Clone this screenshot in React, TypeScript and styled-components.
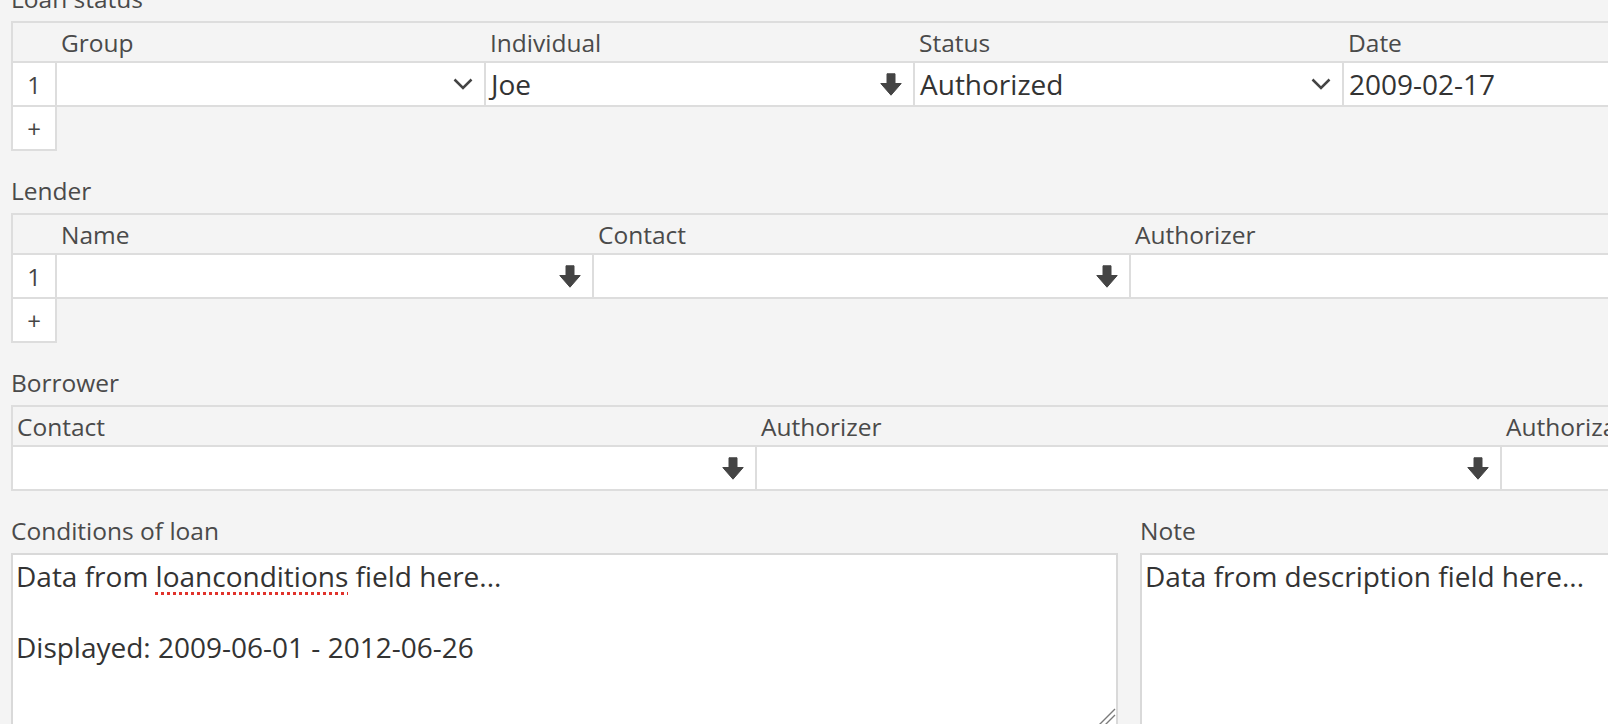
import React from "react";
import styled, { createGlobalStyle } from "styled-components";

const GlobalStyle = createGlobalStyle`
  html, body {
    margin: 0;
    padding: 0;
    background: #f4f4f4;
    overflow: hidden;
  }
  body {
    font-family: "Open Sans", "Noto Sans", "Liberation Sans", sans-serif;
  }
`;

const Page = styled.div`
  display: flex;
  flex-direction: column;
  gap: 24px;
  margin-top: -17px;
  padding-left: 11px;
  width: 2300px;
`;

const Section = styled.section`
  display: flex;
  flex-direction: column;
`;

const SectionLabel = styled.div`
  font-size: 24.5px;
  line-height: 32px;
  margin-bottom: 6px;
  color: #4a4a4a;
  white-space: nowrap;
`;

const Grid = styled.div<{ $cols: string }>`
  display: grid;
  grid-template-columns: ${(p) => p.$cols};
  border-top: 2px solid #dddddd;
  width: max-content;
`;

const HeadCell = styled.div<{ $first?: boolean }>`
  box-sizing: border-box;
  height: 40px;
  display: flex;
  align-items: center;
  padding-left: 4px;
  border-bottom: 2px solid #dddddd;
  border-left: ${(p) => (p.$first ? "2px solid #dddddd" : "none")};
  font-size: 24.5px;
  color: #4a4a4a;
  white-space: nowrap;
`;

const IndexCell = styled.div`
  box-sizing: border-box;
  height: 44px;
  display: flex;
  align-items: center;
  justify-content: center;
  background: #ffffff;
  border: 2px solid #dddddd;
  border-top: none;
  font-size: 24px;
  color: #444444;
`;

const DataCell = styled.div<{ $first?: boolean }>`
  box-sizing: border-box;
  height: 44px;
  display: flex;
  align-items: center;
  justify-content: space-between;
  padding: 0 11px 0 5px;
  background: #ffffff;
  border-right: 2px solid #dddddd;
  border-bottom: 2px solid #dddddd;
  border-left: ${(p) => (p.$first ? "2px solid #dddddd" : "none")};
  font-size: 28px;
  color: #333333;
  white-space: nowrap;
`;

const Fields = styled.div`
  display: grid;
  grid-template-columns: 1107px 1107px;
  column-gap: 22px;
`;

const TextBox = styled.div`
  position: relative;
  box-sizing: border-box;
  height: 175px;
  padding: 4px 3px;
  background: #ffffff;
  border: 2px solid #d9d9d9;
  font-size: 28px;
  line-height: 35.5px;
  color: #333333;
`;

const Line = styled.p`
  margin: 0;
  min-height: 35.5px;
  white-space: nowrap;
`;

const Misspelled = styled.span`
  text-decoration: underline dotted #e0322b;
  text-decoration-thickness: 2.5px;
  text-underline-offset: 5px;
`;

const Grip = styled.svg`
  position: absolute;
  right: 0;
  bottom: 0;
`;

const Chevron = () => (
  <svg width="20" height="12" viewBox="0 0 20 12">
    <path d="M1.5 1.5 L10 10 L18.5 1.5" fill="none" stroke="#444" strokeWidth="2.5" />
  </svg>
);

const ArrowDown = () => (
  <svg width="22" height="23" viewBox="0 0 22 23">
    <path
      d="M7 0.8 H15 V10.5 H21.2 L11 22.2 L0.8 10.5 H7 Z"
      fill="#444"
      stroke="#444"
      strokeWidth="1"
      strokeLinejoin="round"
    />
  </svg>
);

const App = () => {
  return (
    <>
      <GlobalStyle />
      <Page>
        <Section>
          <SectionLabel>Loan status</SectionLabel>
          <Grid $cols="46px repeat(4, 429px)">
            <HeadCell $first />
            <HeadCell>Group</HeadCell>
            <HeadCell>Individual</HeadCell>
            <HeadCell>Status</HeadCell>
            <HeadCell>Date</HeadCell>
            <IndexCell>1</IndexCell>
            <DataCell>
              <span />
              <Chevron />
            </DataCell>
            <DataCell>
              Joe
              <ArrowDown />
            </DataCell>
            <DataCell>
              Authorized
              <Chevron />
            </DataCell>
            <DataCell>2009-02-17</DataCell>
            <IndexCell>+</IndexCell>
          </Grid>
        </Section>

        <Section>
          <SectionLabel>Lender</SectionLabel>
          <Grid $cols="46px repeat(3, 537px)">
            <HeadCell $first />
            <HeadCell>Name</HeadCell>
            <HeadCell>Contact</HeadCell>
            <HeadCell>Authorizer</HeadCell>
            <IndexCell>1</IndexCell>
            <DataCell>
              <span />
              <ArrowDown />
            </DataCell>
            <DataCell>
              <span />
              <ArrowDown />
            </DataCell>
            <DataCell />
            <IndexCell>+</IndexCell>
          </Grid>
        </Section>

        <Section>
          <SectionLabel>Borrower</SectionLabel>
          <Grid $cols="746px 745px 745px">
            <HeadCell $first>Contact</HeadCell>
            <HeadCell>Authorizer</HeadCell>
            <HeadCell>Authorization date</HeadCell>
            <DataCell $first>
              <span />
              <ArrowDown />
            </DataCell>
            <DataCell>
              <span />
              <ArrowDown />
            </DataCell>
            <DataCell />
          </Grid>
        </Section>

        <Fields>
          <Section>
            <SectionLabel>Conditions of loan</SectionLabel>
            <TextBox>
              <Line>
                Data from <Misspelled>loanconditions</Misspelled> field here...
              </Line>
              <Line />
              <Line>Displayed: 2009-06-01 - 2012-06-26</Line>
              <Grip width="18" height="18" viewBox="0 0 18 18">
                <path d="M1 17 L17 1 M7 17 L17 7" stroke="#7a7a7a" strokeWidth="1.4" />
              </Grip>
            </TextBox>
          </Section>
          <Section>
            <SectionLabel>Note</SectionLabel>
            <TextBox>
              <Line>Data from description field here...</Line>
            </TextBox>
          </Section>
        </Fields>
      </Page>
    </>
  );
};

export default App;
